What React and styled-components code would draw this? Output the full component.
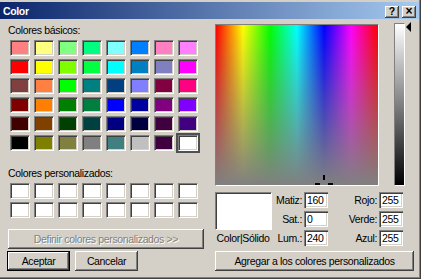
import React from "react";
import styled, { createGlobalStyle } from "styled-components";

const Global = createGlobalStyle`
  html, body { margin: 0; padding: 0; background: #d4d0c8; }
  * { box-sizing: border-box; }
`;

const raised = `
  box-shadow: inset -1px -1px #404040, inset 1px 1px #ffffff, inset -2px -2px #808080, inset 2px 2px #d4d0c8;
`;
const sunken = `
  box-shadow: inset 1px 1px #808080, inset 2px 2px #404040, inset -1px -1px #ffffff, inset -2px -2px #d4d0c8;
`;

const Window = styled.div`
  width: 421px;
  height: 279px;
  background: #d4d0c8;
  padding-top: 2px;
  display: flex;
  flex-direction: column;
  box-shadow: inset -1px -1px #404040, inset -2px -2px #808080;
  font-family: "Liberation Sans", Arial, sans-serif;
  font-size: 10.5px;
  letter-spacing: -0.35px;
  color: #000;
`;

const TitleBar = styled.div`
  height: 17px;
  margin-right: 2px;
  background: linear-gradient(to right, #0a246a, #a6caf0);
  display: flex;
  align-items: center;
  justify-content: space-between;
  padding: 0 3px 0 3px;
`;

const Title = styled.span`
  color: #fff;
  font-weight: bold;
  font-size: 10.5px;
  line-height: 12px;
  margin-top: 1px;
`;

const Caps = styled.div`
  display: flex;
  gap: 3px;
  margin-top: 2px;
`;

const CapButton = styled.div`
  width: 14px;
  height: 12px;
  background: #d4d0c8;
  ${raised}
  display: flex;
  align-items: center;
  justify-content: center;
  font-weight: bold;
  font-size: ${(p) => (p.$big ? "12px" : "10.5px")};
  line-height: 12px;
  letter-spacing: 0;
  padding-bottom: 1px;
`;

const Body = styled.div`
  display: flex;
  padding-top: 5px;
`;

const LeftPane = styled.div`
  width: 215px;
  padding-left: 8px;
  display: flex;
  flex-direction: column;
`;

const SectionLabel = styled.div`
  line-height: 12px;
  margin-top: ${(p) => p.$mt}px;
`;

const SwatchGrid = styled.div`
  display: grid;
  grid-template-columns: repeat(8, 20px);
  grid-auto-rows: 16px;
  column-gap: 4px;
  row-gap: 3px;
  margin: 4px 0 0 2px;
`;

const Swatch = styled.div`
  background: ${(p) => p.$c};
  border: 1px solid;
  border-color: #808080 #ffffff #ffffff #808080;
  box-shadow: inset 1px 1px #404040, inset -1px -1px #d4d0c8;
  outline: ${(p) => (p.$sel ? "2px solid #505050" : "none")};
  outline-offset: 0;
`;

const Button = styled.div`
  height: 20px;
  width: ${(p) => p.$w}px;
  background: #d4d0c8;
  ${raised}
  display: flex;
  align-items: center;
  justify-content: center;
  line-height: 12px;
  color: ${(p) => (p.$disabled ? "#808080" : "#000")};
  text-shadow: ${(p) => (p.$disabled ? "1px 1px #ffffff" : "none")};
`;

const DefaultButton = styled(Button)`
  border: 1px solid #000;
  margin-left: -1px;
`;

const DefineButton = styled(Button)`
  margin-top: 11px;
`;

const ButtonRow = styled.div`
  display: flex;
  gap: 5px;
  margin-top: 2px;
`;

const RightPane = styled.div`
  display: flex;
  flex-direction: column;
`;

const TopRow = styled.div`
  display: flex;
`;

const Spectrum = styled.div`
  position: relative;
  width: 164px;
  height: 162px;
  border: 1px solid;
  border-color: #808080 #ffffff #ffffff #808080;
  background:
    linear-gradient(to bottom, rgba(128,128,128,0), #808080),
    linear-gradient(to right, #ff0000 0%, #ffff00 16.67%, #00ff00 33.33%, #00ffff 50%, #0000ff 66.67%, #ff00ff 83.33%, #ff0000 100%);
  overflow: hidden;
`;

const Cross = styled.svg`
  position: absolute;
  left: ${(p) => p.$x - 10}px;
  top: ${(p) => p.$y - 10}px;
`;

const LumWrap = styled.div`
  display: flex;
  margin-left: 15px;
`;

const LumBar = styled.div`
  width: 11px;
  height: 163px;
  margin-top: -1px;
  border: 1px solid;
  border-color: #808080 #ffffff #ffffff #808080;
  background: linear-gradient(to bottom, #ffffff, #000000);
`;

const ArrowTrack = styled.div`
  width: 7px;
  padding-top: 0px;
  margin-top: -2px;
`;

const BottomRow = styled.div`
  display: flex;
  margin-top: 6px;
`;

const PreviewCol = styled.div`
  width: 56px;
  display: flex;
  flex-direction: column;
  align-items: center;
`;

const PreviewBox = styled.div`
  width: 57px;
  height: 38px;
  background: ${(p) => p.$c};
  border: 1px solid;
  border-color: #808080 #ffffff #ffffff #808080;
  box-shadow: inset 1px 1px #404040;
`;

const PreviewLabel = styled.div`
  line-height: 12px;
  margin-top: 2px;
`;

const FieldGrid = styled.div`
  display: grid;
  grid-template-columns: ${(p) => p.$lw}px 24px;
  grid-auto-rows: 16px;
  column-gap: 2px;
  row-gap: 3px;
`;

const FieldLabel = styled.div`
  text-align: right;
  line-height: 16px;
`;

const Field = styled.div`
  background: #fff;
  ${sunken}
  line-height: 16px;
  padding-left: 3px;
`;

const AddButton = styled(Button)`
  margin-top: 5px;
`;

const basic = [
  "#FF8080", "#FFFF80", "#80FF80", "#00FF80", "#80FFFF", "#0080FF", "#FF80C0", "#FF80FF",
  "#FF0000", "#FFFF00", "#80FF00", "#00FF40", "#00FFFF", "#0080C0", "#8080C0", "#FF00FF",
  "#804040", "#FF8040", "#00FF00", "#008080", "#004080", "#8080FF", "#800040", "#FF0080",
  "#800000", "#FF8000", "#008000", "#008040", "#0000FF", "#0000A0", "#800080", "#8000FF",
  "#400000", "#804000", "#004000", "#004040", "#000080", "#000040", "#400040", "#400080",
  "#000000", "#808000", "#808040", "#808080", "#408080", "#C0C0C0", "#400040", "#FFFFFF",
];

const hsl = [["Matiz:", "160"], ["Sat.:", "0"], ["Lum.:", "240"]];
const rgb = [["Rojo:", "255"], ["Verde:", "255"], ["Azul:", "255"]];

export default function App() {
  const hue = 160;
  const sat = 0;
  const cx = Math.round((hue / 239) * 162);
  const cy = Math.round(((240 - sat) / 240) * 160) - 1;
  return (
    <Window>
      <Global />
      <TitleBar>
        <Title>Color</Title>
        <Caps>
          <CapButton>?</CapButton>
          <CapButton $big>×</CapButton>
        </Caps>
      </TitleBar>
      <Body>
        <LeftPane>
          <SectionLabel $mt={0}>Colores básicos:</SectionLabel>
          <SwatchGrid>
            {basic.map((c, i) => (
              <Swatch key={i} $c={c} $sel={i === basic.length - 1} />
            ))}
          </SwatchGrid>
          <SectionLabel $mt={16}>Colores personalizados:</SectionLabel>
          <SwatchGrid>
            {Array.from({ length: 16 }).map((_, i) => (
              <Swatch key={i} $c="#ffffff" />
            ))}
          </SwatchGrid>
          <DefineButton $w={196} $disabled>Definir colores personalizados &gt;&gt;</DefineButton>
          <ButtonRow>
            <DefaultButton $w={63}>Aceptar</DefaultButton>
            <Button $w={63}>Cancelar</Button>
          </ButtonRow>
        </LeftPane>
        <RightPane>
          <TopRow>
            <Spectrum>
              <Cross $x={cx} $y={cy} width="20" height="20" viewBox="0 0 20 20">
                <rect x="9" y="1" width="2" height="5" fill="#000" />
                <rect x="9" y="14" width="2" height="5" fill="#000" />
                <rect x="1" y="9" width="5" height="2" fill="#000" />
                <rect x="14" y="9" width="5" height="2" fill="#000" />
              </Cross>
            </Spectrum>
            <LumWrap>
              <LumBar />
              <ArrowTrack>
                <svg width="7" height="10" viewBox="0 0 7 10">
                  <polygon points="1,5 6,0 6,10" fill="#000" />
                </svg>
              </ArrowTrack>
            </LumWrap>
          </TopRow>
          <BottomRow>
            <PreviewCol>
              <PreviewBox $c="#ffffff" />
              <PreviewLabel>Color|Sólido</PreviewLabel>
            </PreviewCol>
            <FieldGrid $lw={31}>
              {hsl.map(([l, v]) => (
                <React.Fragment key={l}>
                  <FieldLabel>{l}</FieldLabel>
                  <Field>{v}</Field>
                </React.Fragment>
              ))}
            </FieldGrid>
            <FieldGrid $lw={49}>
              {rgb.map(([l, v]) => (
                <React.Fragment key={l}>
                  <FieldLabel>{l}</FieldLabel>
                  <Field>{v}</Field>
                </React.Fragment>
              ))}
            </FieldGrid>
          </BottomRow>
          <AddButton $w={199}>Agregar a los colores personalizados</AddButton>
        </RightPane>
      </Body>
    </Window>
  );
}
